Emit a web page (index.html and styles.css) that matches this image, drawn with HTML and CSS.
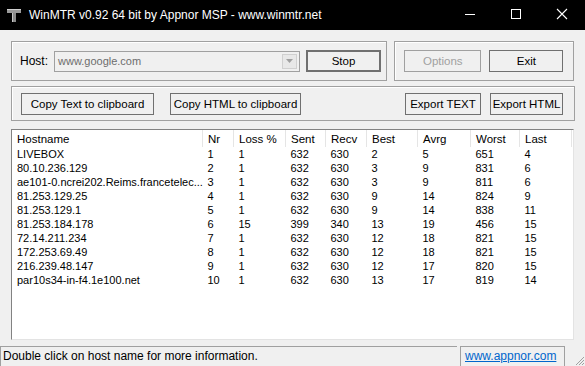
FILE: index.html
```html
<!DOCTYPE html>
<html lang="en">
<head>
    <meta charset="UTF-8">
    <title>WinMTR</title>
    <link rel="stylesheet" href="styles.css">
</head>
<body>

<div class="titlebar">
    <svg class="app-icon" width="14" height="14" viewBox="0 0 14 14">
        <rect x="0" y="1" width="14" height="4" fill="#9a9a9a"/>
        <rect x="0" y="1" width="14" height="1" fill="#d0d0d0"/>
        <rect x="5" y="5" width="4" height="9" fill="#8a8a8a"/>
        <rect x="5" y="5" width="1" height="9" fill="#c8c8c8"/>
    </svg>
    <span class="title">WinMTR v0.92 64 bit by Appnor MSP - www.winmtr.net</span>
    <div class="controls">
        <svg width="46" height="30" viewBox="0 0 46 30"><rect x="18" y="14" width="10" height="1" fill="#fff"/></svg>
        <svg width="46" height="30" viewBox="0 0 46 30"><rect x="18.5" y="9.5" width="9" height="9" fill="none" stroke="#fff"/></svg>
        <svg width="46" height="30" viewBox="0 0 46 30"><path d="M18 9 L28 19 M28 9 L18 19" stroke="#fff" stroke-width="1.1"/></svg>
    </div>
</div>

<div class="client">
    <div class="row">
        <div class="group host-group">
            <label class="host-label">Host:</label>
            <div class="combo">
                <span>www.google.com</span>
                <div class="combo-btn">
                    <svg width="7" height="4" viewBox="0 0 7 4"><path d="M0 0 H7 L3.5 4 Z" fill="#a0a0a0"/></svg>
                </div>
            </div>
            <button class="btn btn-default stop">Stop</button>
        </div>
        <div class="group side-group">
            <button class="btn options" disabled>Options</button>
            <button class="btn exit">Exit</button>
        </div>
    </div>

    <div class="group export-group">
        <button class="btn copy-text">Copy Text to clipboard</button>
        <button class="btn copy-html">Copy HTML to clipboard</button>
        <button class="btn export-text">Export TEXT</button>
        <button class="btn export-html">Export HTML</button>
    </div>

    <div class="list">
        <table>
            <thead>
                <tr>
                    <th class="c-host">Hostname</th>
                    <th class="c-nr">Nr</th>
                    <th class="c-loss">Loss %</th>
                    <th class="c-sent">Sent</th>
                    <th class="c-recv">Recv</th>
                    <th class="c-best">Best</th>
                    <th class="c-avrg">Avrg</th>
                    <th class="c-worst">Worst</th>
                    <th class="c-last">Last</th>
                    <th class="c-fill"></th>
                </tr>
            </thead>
            <tbody>
                <tr><td>LIVEBOX</td><td>1</td><td>1</td><td>632</td><td>630</td><td>2</td><td>5</td><td>651</td><td>4</td><td></td></tr>
                <tr><td>80.10.236.129</td><td>2</td><td>1</td><td>632</td><td>630</td><td>3</td><td>9</td><td>831</td><td>6</td><td></td></tr>
                <tr><td>ae101-0.ncrei202.Reims.francetelec...</td><td>3</td><td>1</td><td>632</td><td>630</td><td>3</td><td>9</td><td>811</td><td>6</td><td></td></tr>
                <tr><td>81.253.129.25</td><td>4</td><td>1</td><td>632</td><td>630</td><td>9</td><td>14</td><td>824</td><td>9</td><td></td></tr>
                <tr><td>81.253.129.1</td><td>5</td><td>1</td><td>632</td><td>630</td><td>9</td><td>14</td><td>838</td><td>11</td><td></td></tr>
                <tr><td>81.253.184.178</td><td>6</td><td>15</td><td>399</td><td>340</td><td>13</td><td>19</td><td>456</td><td>15</td><td></td></tr>
                <tr><td>72.14.211.234</td><td>7</td><td>1</td><td>632</td><td>630</td><td>12</td><td>18</td><td>821</td><td>15</td><td></td></tr>
                <tr><td>172.253.69.49</td><td>8</td><td>1</td><td>632</td><td>630</td><td>12</td><td>18</td><td>821</td><td>15</td><td></td></tr>
                <tr><td>216.239.48.147</td><td>9</td><td>1</td><td>632</td><td>630</td><td>12</td><td>17</td><td>820</td><td>15</td><td></td></tr>
                <tr><td>par10s34-in-f4.1e100.net</td><td>10</td><td>1</td><td>632</td><td>630</td><td>13</td><td>17</td><td>819</td><td>14</td><td></td></tr>
            </tbody>
        </table>
    </div>
</div>

<div class="statusbar">
    <div class="panel panel-main">Double click on host name for more information.</div>
    <div class="panel panel-link"><a href="#">www.appnor.com</a></div>
    <svg class="grip" width="12" height="12" viewBox="0 0 12 12">
        <path d="M11 3 L3 11 M11 6 L6 11 M11 9 L9 11" stroke="#a0a0a0" stroke-width="1"/>
    </svg>
</div>

</body>
</html>
```

FILE: styles.css
```css
body {
    margin: 0;
    width: 585px;
    height: 366px;
    overflow: hidden;
    background: #f0f0f0;
    font-family: "Liberation Sans", Arial, sans-serif;
    font-size: 11px;
    color: #000;
}
.titlebar {
    height: 30px;
    background: #000;
    color: #fff;
    display: flex;
    align-items: center;
}
.app-icon {
    margin-left: 7px;
    margin-right: 8px;
}
.title {
    font-size: 12px;
    flex: 1;
}
.controls {
    display: flex;
    align-items: center;
    height: 30px;
}
.controls svg {
    display: block;
}
.client {
    padding: 11px 11px 0 11px;
}
.row {
    display: flex;
    gap: 7px;
}
.group {
    border: 1px solid #a0a0a0;
    box-shadow: inset 1px 1px 0 #fff;
    display: flex;
    align-items: center;
    box-sizing: border-box;
}
.host-group {
    width: 377px;
    height: 40px;
    padding-left: 8px;
}
.host-label {
    width: 34px;
    font-size: 12px;
}
.combo {
    width: 246px;
    height: 21px;
    box-sizing: border-box;
    border: 1px solid #a0a0a0;
    background: #f0f0f0;
    color: #6d6d6d;
    display: flex;
    align-items: center;
    padding-left: 3px;
    font-size: 11px;
}
.combo span {
    flex: 1;
}
.combo-btn {
    width: 15px;
    height: 15px;
    margin-right: 2px;
    border: 1px solid #d0d0d0;
    box-sizing: border-box;
    background: #e8e8e8;
    display: flex;
    align-items: center;
    justify-content: center;
}
.btn {
    font-family: "Liberation Sans", Arial, sans-serif;
    font-size: 11.5px;
    background: #f0f0f0;
    color: #000;
    border: 1px solid #707070;
    height: 22px;
    padding: 0;
    box-sizing: border-box;
}
.btn:disabled {
    color: #a0a0a0;
    border-color: #a0a0a0;
}
.btn-default {
    border: 2px solid #707070;
}
.stop {
    width: 75px;
    margin-left: 6px;
}
.side-group {
    width: 180px;
    height: 40px;
    padding-left: 9px;
}
.options {
    width: 77px;
}
.exit {
    width: 74px;
    margin-left: 8px;
}
.export-group {
    margin-top: 5px;
    width: 564px;
    height: 35px;
    padding: 0 11px 0 9px;
}
.copy-text {
    width: 133px;
}
.copy-html {
    width: 131px;
    margin-left: 16px;
}
.export-text {
    width: 76px;
    margin-left: auto;
}
.export-html {
    width: 73px;
    margin-left: 9px;
}
.list {
    margin-top: 8px;
    width: 563px;
    height: 211px;
    box-sizing: border-box;
    background: #fff;
    border-top: 1px solid #828282;
    border-left: 1px solid #828282;
    border-right: 1px solid #e3e3e3;
    border-bottom: 1px solid #e3e3e3;
    overflow: hidden;
}
table {
    border-collapse: collapse;
    table-layout: fixed;
    width: 100%;
}
th, td {
    text-align: left;
    font-weight: normal;
    padding: 0 0 0 5px;
    white-space: nowrap;
    overflow: hidden;
}
th {
    height: 17px;
    border-right: 1px solid #e5e5e5;
    font-size: 11.5px;
}
th.c-fill {
    border-right: none;
}
td {
    height: 14px;
    line-height: 14px;
}
.c-host { width: 185px; }
.c-nr { width: 25px; }
.c-loss { width: 46px; }
.c-sent { width: 34px; }
.c-recv { width: 35px; }
.c-best { width: 45px; }
.c-avrg { width: 47px; }
.c-worst { width: 43px; }
.c-last { width: 46px; }
.statusbar {
    position: absolute;
    left: 0;
    top: 346px;
    width: 585px;
    height: 20px;
    display: flex;
    font-family: "Liberation Sans", Arial, sans-serif;
    font-size: 12px;
}
.panel {
    border-top: 1px solid #a0a0a0;
    border-left: 1px solid #a0a0a0;
    box-sizing: border-box;
    height: 20px;
    padding: 2px 0 0 2px;
}
.panel-main {
    width: 457px;
}
.panel-link {
    width: 105px;
    margin-left: 3px;
    border-right: 1px solid #a0a0a0;
    padding-left: 4px;
}
.panel-link a {
    color: #0066cc;
}
.grip {
    position: absolute;
    right: 0;
    bottom: 0;
}
```
